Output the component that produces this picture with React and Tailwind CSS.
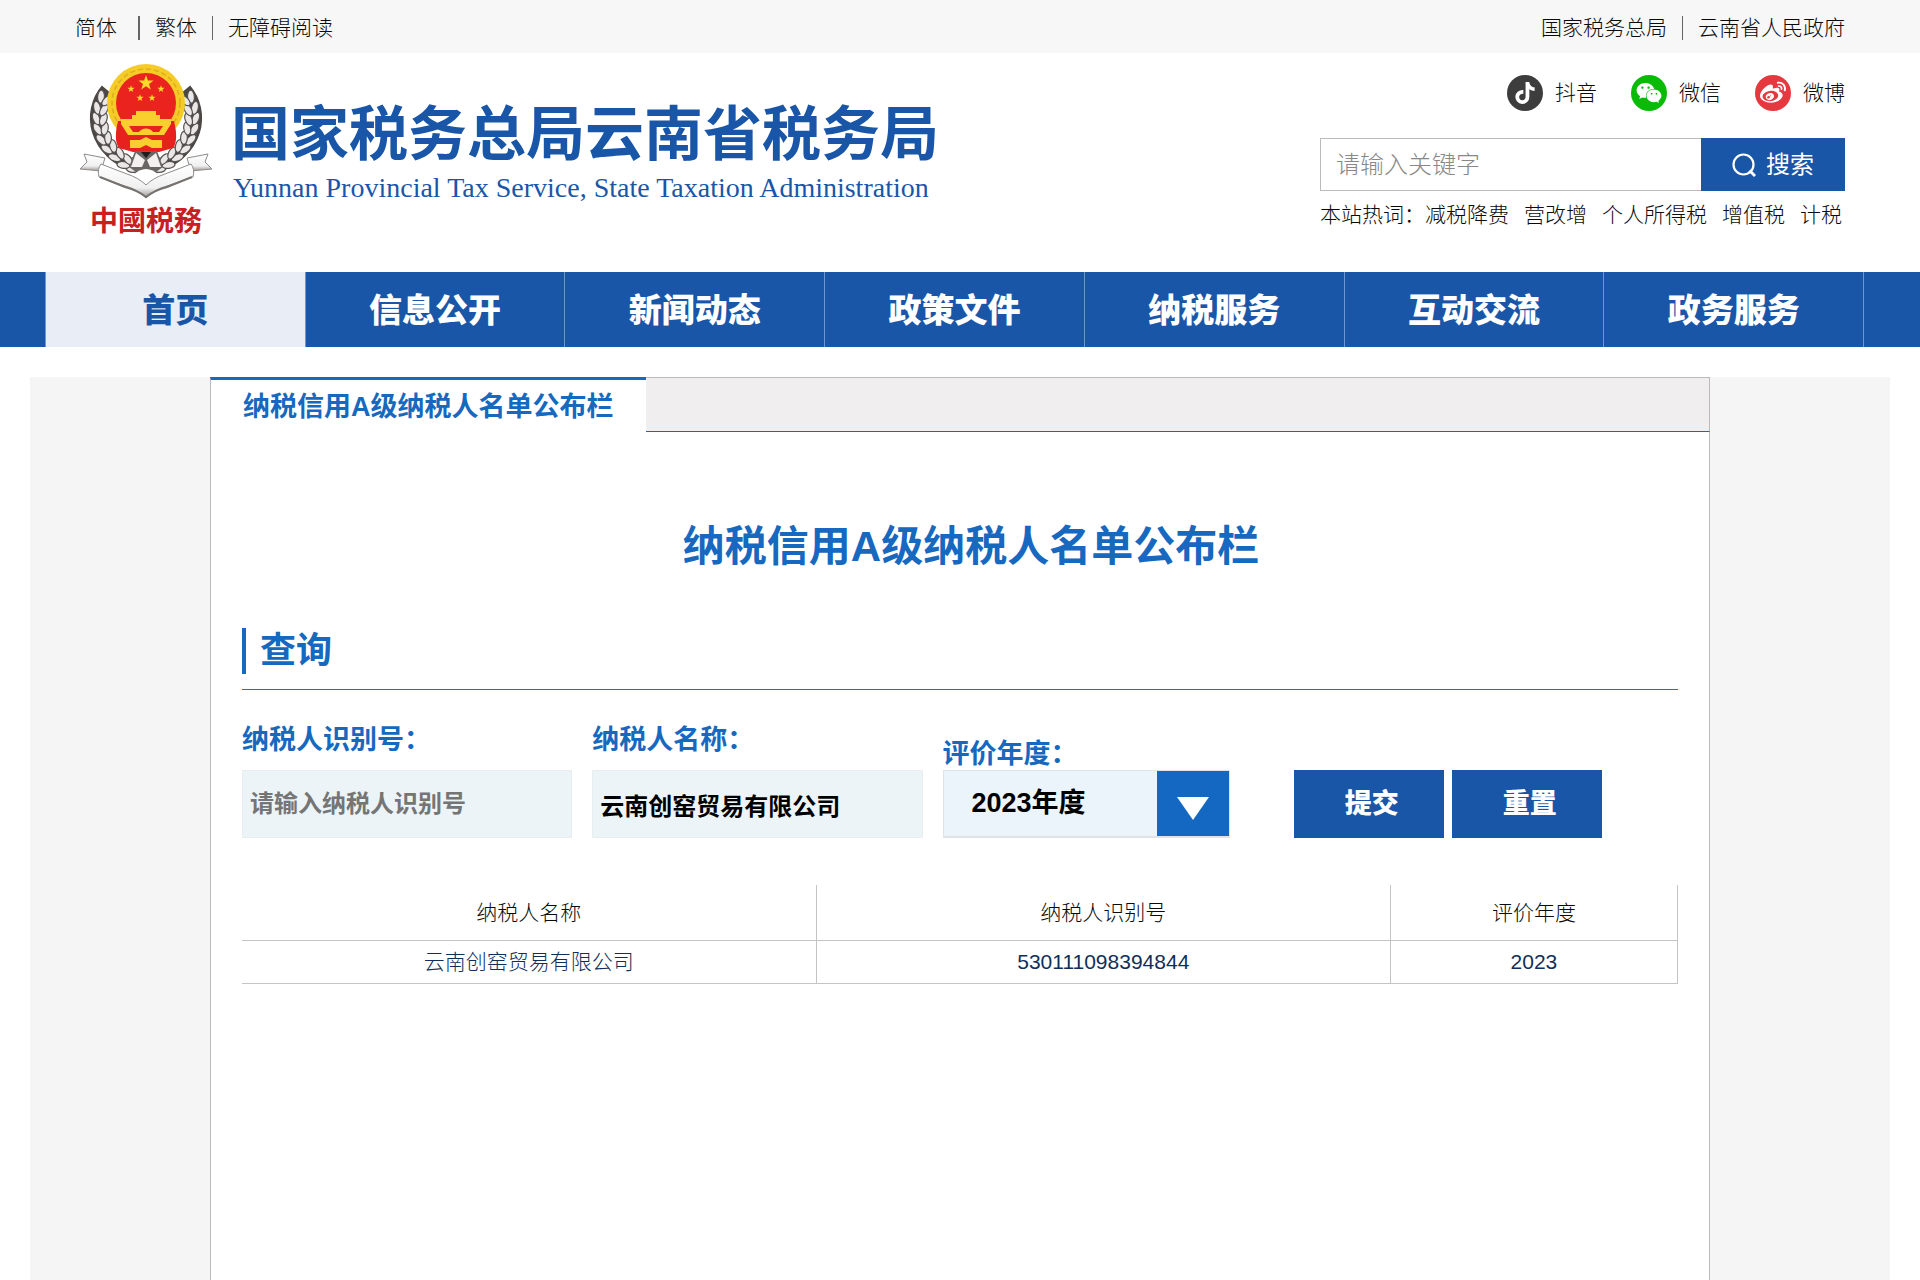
import { useState } from 'react';
import { FaTiktok, FaWeibo, FaWeixin } from 'react-icons/fa';

const navItems = ['首页', '信息公开', '新闻动态', '政策文件', '纳税服务', '互动交流', '政务服务'];

const hotWords = ['减税降费', '营改增', '个人所得税', '增值税', '计税'];

const socials = [
  { label: '抖音', icon: FaTiktok, color: 'bg-[#3d3d3d]', size: 'size-[22px]' },
  { label: '微信', icon: FaWeixin, color: 'bg-[#09bb07]', size: 'size-[26px]' },
  { label: '微博', icon: FaWeibo, color: 'bg-[#e6383f]', size: 'size-[26px]' },
];

const results = [{ name: '云南创窑贸易有限公司', code: '530111098394844', year: '2023' }];

function Star({ x, y, r }) {
  const points = [...Array(10)]
    .map((_, i) => {
      const radius = i % 2 ? r * 0.4 : r;
      const a = (Math.PI / 5) * i - Math.PI / 2;
      return `${x + radius * Math.cos(a)},${y + radius * Math.sin(a)}`;
    })
    .join(' ');
  return <polygon points={points} fill="#fbd92b" />;
}

// One side of the wheat wreath, the other side is mirrored
function Laurel() {
  const leaves = [
    [54, 104, 70], [45, 100, 62], [37, 93, 48], [30, 85, 36], [25, 76, 24], [22, 66, 12], [21, 56, 2], [22, 46, -8], [26, 36, -24],
  ];
  return (
    <g>
      <path d="M27 28 C8 50 12 92 60 108" fill="none" stroke="#4a4744" strokeWidth="11" />
      {leaves.map(([x, y, a]) => (
        <g key={y} transform={`translate(${x} ${y}) rotate(${-a})`} fill="#e9e8e6" stroke="#55514e" strokeWidth="1.2">
          <ellipse cx="-4" cy="0" rx="3.4" ry="6.5" transform="rotate(-20)" />
          <ellipse cx="4" cy="1" rx="3.4" ry="6.5" transform="rotate(22)" />
        </g>
      ))}
    </g>
  );
}

function Emblem() {
  return (
    <svg viewBox="0 0 134 138" className="h-[138px] w-[134px]" aria-hidden="true">
      <defs>
        <linearGradient id="ribbon" x1="0" y1="0" x2="0" y2="1">
          <stop offset="0" stopColor="#ffffff" />
          <stop offset="0.7" stopColor="#f0f0f0" />
          <stop offset="1" stopColor="#9a9795" />
        </linearGradient>
      </defs>
      <Laurel />
      <g transform="translate(134 0) scale(-1 1)"><Laurel /></g>

      {/* Golden ring and red field */}
      <circle cx="67" cy="42" r="39" fill="#f5cb28" />
      <circle cx="67" cy="42" r="34" fill="none" stroke="#e3ab1b" strokeWidth="1.5" strokeDasharray="5 3" />
      <path d="M39 60 H95 C98 72 98 82 94 87 L80 91 H54 L40 87 C36 82 36 72 39 60 Z" fill="#e6211e" />
      <circle cx="67" cy="42" r="30" fill="#ea231f" />
      <Star x={67} y={22} r={8} />
      <Star x={52} y={28} r={3.8} />
      <Star x={82} y={28} r={3.8} />
      <Star x={61} y={37} r={3.8} />
      <Star x={73} y={37} r={3.8} />

      {/* Gate tower and gear */}
      <path d="M57 50 H77 V54 H81 V58 H92 V63 H42 V58 H53 V54 H57 Z" fill="#f8cf2d" />
      <path d="M42 63 H92 L85 74 H49 Z" fill="#f8cf2d" />
      <path d="M50 65 H84 L80 71 H74 A8 7 0 0 0 60 71 H54 Z" fill="#e6211e" />
      <path d="M62 73 a5 4 0 0 1 10 0 Z" fill="#f8cf2d" />
      <path d="M51 79 H61 L67 76 L73 79 H83 V87 H73 L67 84 L61 87 H51 Z" fill="#f8cf2d" />

      {/* Knot */}
      <path d="M56 90 H78 L84 106 L67 118 L50 106 Z" fill="#6a6664" />
      <path d="M62 91 H72 L67 97 Z" fill="#1f1d1c" />
      <path d="M57 92 L66 99 L63 106 L52 106 Z M77 92 L68 99 L71 106 L82 106 Z" fill="#f2f1f0" />
      <path d="M54 114 Q67 102 80 114 L67 121 Z" fill="#ffffff" />

      {/* Ribbon */}
      <g fill="url(#ribbon)" stroke="#8f8c8a" strokeWidth="1">
        <path d="M5 93 L26 97 L22 110 L1 108 L8 101 Z" />
        <path d="M129 93 L108 97 L112 110 L133 108 L126 101 Z" />
        <path d="M22 103 Q18 108 20 116 L46 125 Q58 128 67 137 Q76 128 88 125 L114 116 Q116 108 112 103 L86 113 Q74 117 67 124 Q60 117 48 113 Z" />
      </g>
      <path d="M21 116 L46 126 Q58 129 67 136 Q76 129 88 126 L113 116" fill="none" stroke="#75716f" strokeWidth="2" />
    </svg>
  );
}

function TopBar() {
  return (
    <div className="flex h-[53px] items-center justify-between bg-[#f7f7f7] px-[75px] pt-0.5 font-light">
      <div className="flex items-center">
        <a href="#jian">简体</a>
        <span className="mr-[15px] ml-[21px] h-6 w-0.5 bg-[#666]"></span>
        <a href="#fan">繁体</a>
        <span className="mx-[15px] h-6 w-px bg-[#666]"></span>
        <a href="#accessible">无障碍阅读</a>
      </div>
      <div className="flex items-center">
        <a href="#sta">国家税务总局</a>
        <span className="mx-[15px] h-6 w-px bg-[#666]"></span>
        <a href="#gov">云南省人民政府</a>
      </div>
    </div>
  );
}

function Header() {
  return (
    <header className="flex h-[219px] items-start justify-between px-[75px]">
      <a href="#home" className="flex items-start gap-[18px] pt-2 pl-1">
        <span className="flex flex-col items-center">
          <Emblem />
          <span className="text-[28px] leading-[46px] font-bold text-[#c8201f]">中國税務</span>
        </span>
        <span className="flex flex-col pt-[42px] text-[#1a56a8]">
          <span className="text-[59px] leading-[64px] font-bold">国家税务总局云南省税务局</span>
          <span className="pt-[3px] pl-0.5 font-['Liberation_Serif',serif] text-[28px] leading-[36px]">
            Yunnan Provincial Tax Service, State Taxation Administration
          </span>
        </span>
      </a>

      <div className="flex w-[525px] flex-col pt-[22px] font-light">
        <div className="flex items-center justify-end gap-[34px]">
          {socials.map(({ label, icon: Icon, color, size }) => (
            <a key={label} href={`#${label}`} className="flex items-center gap-3">
              <span className={`flex size-9 items-center justify-center rounded-full text-white ${color}`}>
                <Icon className={size} />
              </span>
              {label}
            </a>
          ))}
        </div>

        <form className="mt-[27px] flex h-[53px] text-2xl" onSubmit={(e) => e.preventDefault()}>
          <input
            type="text"
            aria-label="请输入关键字"
            placeholder="请输入关键字"
            className="min-w-0 flex-1 border border-r-0 border-[#bbb] px-[15px] outline-none placeholder:text-[#888]"
          />
          <button type="submit" className="flex w-36 items-center justify-center gap-2.5 bg-[#1a56a8] font-normal text-white">
            <svg viewBox="0 0 24 24" className="size-6" fill="none" stroke="currentColor" strokeWidth="2.2" aria-hidden="true">
              <circle cx="11.5" cy="11.5" r="10" />
              <path d="M17.5 17.5 L23 23" strokeWidth="2.8" />
            </svg>
            搜索
          </button>
        </form>

        <div className="mt-2 flex leading-8 whitespace-nowrap">
          <span>本站热词：</span>
          <div className="flex gap-[15px]">
            {hotWords.map((word) => (
              <a key={word} href={`#${word}`}>{word}</a>
            ))}
          </div>
        </div>
      </div>
    </header>
  );
}

function Nav() {
  return (
    <nav className="bg-[#1a56a8] pr-[56px] pl-[45px]">
      <ul className="flex border-l border-[#6f97cf]">
        {navItems.map((item, i) => (
          <li key={item} className="flex-1 border-r border-[#6f97cf]">
            <a
              href={`#${item}`}
              className={`flex h-[75px] items-center justify-center pt-0.5 text-[33px] font-black ${
                i === 0 ? 'bg-[#e8edf6] text-[#1a56a8]' : 'text-white'
              }`}
            >
              {item}
            </a>
          </li>
        ))}
      </ul>
    </nav>
  );
}

function QueryForm() {
  const [taxNo, setTaxNo] = useState('');
  const [name, setName] = useState('云南创窑贸易有限公司');
  const [year, setYear] = useState('2023');

  const handleReset = () => {
    setTaxNo('');
    setName('');
    setYear('2023');
  };

  return (
    <form className="mt-8 flex items-end gap-5 font-bold" onSubmit={(e) => e.preventDefault()}>
      <div className="flex w-[23%] flex-col gap-3">
        <label htmlFor="taxNo" className="text-[27px] leading-9 text-[#1768bf]">纳税人识别号：</label>
        <input
          id="taxNo"
          type="text"
          value={taxNo}
          onChange={(e) => setTaxNo(e.target.value)}
          placeholder="请输入纳税人识别号"
          className="h-[68px] border border-[#e8eeee] bg-[#ecf4f8] px-[7px] text-2xl outline-none placeholder:text-[#757575]"
        />
      </div>
      <div className="flex w-[23%] flex-col gap-3">
        <label htmlFor="name" className="text-[27px] leading-9 text-[#1768bf]">纳税人名称：</label>
        <input
          id="name"
          type="text"
          value={name}
          onChange={(e) => setName(e.target.value)}
          className="h-[68px] border border-[#e8eeee] bg-[#ecf4f8] px-[7px] text-2xl text-black outline-none"
        />
      </div>
      <div className="flex w-[20%] flex-col">
        <label htmlFor="year" className="text-[27px] leading-8 text-[#1768bf]">评价年度：</label>
        <div className="relative">
          <select
            id="year"
            value={year}
            onChange={(e) => setYear(e.target.value)}
            className="block h-[68px] w-full appearance-none border border-b-2 border-[#dfe3e6] bg-[#ecf4fb] pl-7 text-[27px] text-black outline-none"
          >
            <option value="2023">2023年度</option>
            <option value="2022">2022年度</option>
            <option value="2021">2021年度</option>
          </select>
          <span className="pointer-events-none absolute top-px right-px flex h-[65px] w-[72px] items-center justify-center bg-[#1468c2]">
            <svg viewBox="0 0 34 24" className="mt-2 h-6 w-[34px]" aria-hidden="true">
              <path d="M1 1 H33 L17 24 Z" fill="#fff" />
            </svg>
          </span>
        </div>
      </div>
      <div className="ml-11 flex gap-2 text-[27px] font-black text-white">
        <button type="submit" className="h-[68px] w-[150px] bg-[#1a56a8] pl-1.5">提交</button>
        <button type="button" onClick={handleReset} className="h-[68px] w-[150px] bg-[#1a56a8] pl-1.5">重置</button>
      </div>
    </form>
  );
}

function ResultTable() {
  return (
    <table className="mt-[47px] w-full table-fixed border-collapse text-center">
      <thead>
        <tr className="h-[55px] border-b border-[#c4c4c4]">
          <th className="w-[40%] border-r border-[#c4c4c4] font-light">纳税人名称</th>
          <th className="w-[40%] border-r border-[#c4c4c4] font-light">纳税人识别号</th>
          <th className="w-[20%] border-r border-[#c4c4c4] font-light">评价年度</th>
        </tr>
      </thead>
      <tbody>
        {results.map((row) => (
          <tr key={row.code} className="h-[43px] border-b border-[#c4c4c4] font-light text-[#0f2f5a]">
            <td className="border-r border-[#c4c4c4]">{row.name}</td>
            <td className="border-r border-[#c4c4c4]">{row.code}</td>
            <td className="border-r border-[#c4c4c4]">{row.year}</td>
          </tr>
        ))}
      </tbody>
    </table>
  );
}

export default function App() {
  return (
    <div className="flex min-h-screen flex-col bg-white font-['Liberation_Sans','Noto_Sans_CJK_SC',sans-serif] text-[21px] text-[#0a0a0a]">
      <TopBar />
      <Header />
      <Nav />

      <main className="mx-[30px] mt-[30px] flex flex-1 flex-col bg-[#f5f5f5]">
        <div className="mx-auto flex w-full max-w-[1500px] flex-1 flex-col">
          <div className="flex h-[55px]">
            <h2 className="border-t-[3px] border-l border-t-[#1768bf] border-l-[#bbb] bg-white px-8 text-[27px] leading-[54px] font-bold whitespace-nowrap text-[#1768bf]">
              纳税信用A级纳税人名单公布栏
            </h2>
            <div className="flex-1 border-t border-r border-b border-t-[#bbb] border-r-[#bbb] border-b-[#1f66a8] bg-[#f0eeee]"></div>
          </div>

          <section className="flex-1 border-x border-[#bbb] bg-white px-[31px]">
            <h1 className="pt-[83px] pl-[22px] text-center text-[42px] leading-[63px] font-bold text-[#1768bf]">
              纳税信用A级纳税人名单公布栏
            </h1>
            <div className="mt-[50px] border-b border-[#2a6fa5] pb-[15px]">
              <h3 className="border-l-4 border-[#1768bf] pl-[14px] text-[36px] leading-[46px] font-bold text-[#1768bf]">查询</h3>
            </div>
            <QueryForm />
            <ResultTable />
          </section>
        </div>
      </main>
    </div>
  );
}
